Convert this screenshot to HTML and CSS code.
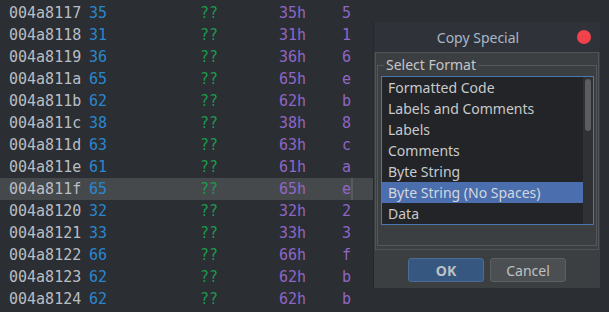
FILE: index.html
```html
<!DOCTYPE html>
<html>
<head>
<meta charset="utf-8">
<link rel="stylesheet" href="styles.css">
</head>
<body>
<div class="listing">
  <div class="row"><span class="addr">004a8117</span><span class="byte">35</span><span class="q">??</span><span class="hex">35h</span><span class="ch">5</span></div>
  <div class="row"><span class="addr">004a8118</span><span class="byte">31</span><span class="q">??</span><span class="hex">31h</span><span class="ch">1</span></div>
  <div class="row"><span class="addr">004a8119</span><span class="byte">36</span><span class="q">??</span><span class="hex">36h</span><span class="ch">6</span></div>
  <div class="row"><span class="addr">004a811a</span><span class="byte">65</span><span class="q">??</span><span class="hex">65h</span><span class="ch">e</span></div>
  <div class="row"><span class="addr">004a811b</span><span class="byte">62</span><span class="q">??</span><span class="hex">62h</span><span class="ch">b</span></div>
  <div class="row"><span class="addr">004a811c</span><span class="byte">38</span><span class="q">??</span><span class="hex">38h</span><span class="ch">8</span></div>
  <div class="row"><span class="addr">004a811d</span><span class="byte">63</span><span class="q">??</span><span class="hex">63h</span><span class="ch">c</span></div>
  <div class="row"><span class="addr">004a811e</span><span class="byte">61</span><span class="q">??</span><span class="hex">61h</span><span class="ch">a</span></div>
  <div class="row current"><span class="addr">004a811f</span><span class="byte">65</span><span class="q">??</span><span class="hex">65h</span><span class="ch">e</span><span class="cursor"></span></div>
  <div class="row"><span class="addr">004a8120</span><span class="byte">32</span><span class="q">??</span><span class="hex">32h</span><span class="ch">2</span></div>
  <div class="row"><span class="addr">004a8121</span><span class="byte">33</span><span class="q">??</span><span class="hex">33h</span><span class="ch">3</span></div>
  <div class="row"><span class="addr">004a8122</span><span class="byte">66</span><span class="q">??</span><span class="hex">66h</span><span class="ch">f</span></div>
  <div class="row"><span class="addr">004a8123</span><span class="byte">62</span><span class="q">??</span><span class="hex">62h</span><span class="ch">b</span></div>
  <div class="row"><span class="addr">004a8124</span><span class="byte">62</span><span class="q">??</span><span class="hex">62h</span><span class="ch">b</span></div>
</div>

<div class="dialog">
  <div class="titlebar">
    <span class="title">Copy Special</span>
    <span class="close"></span>
  </div>
  <div class="panel">
    <fieldset class="group">
      <legend>Select Format</legend>
      <div class="list">
        <div class="items">
          <div class="item">Formatted Code</div>
          <div class="item">Labels and Comments</div>
          <div class="item">Labels</div>
          <div class="item">Comments</div>
          <div class="item">Byte String</div>
          <div class="item selected">Byte String (No Spaces)</div>
          <div class="item">Data</div>
        </div>
        <div class="scroll"><div class="thumb"></div></div>
      </div>
    </fieldset>
  </div>
  <div class="buttons">
    <button class="btn ok">OK</button>
    <button class="btn cancel">Cancel</button>
  </div>
</div>
</body>
</html>
```

FILE: styles.css
```css
html, body {
  margin: 0;
  padding: 0;
  background: #2b2e32;
  width: 609px;
  height: 312px;
  overflow: hidden;
}

.listing {
  padding-top: 2px;
  font-family: "DejaVu Sans Mono", monospace;
  font-size: 15px;
}

.row {
  position: relative;
  display: grid;
  grid-template-columns: 80px 111px 79px 63px 40px;
  height: 22px;
  align-items: center;
  padding-left: 9px;
  width: 364px;
}

.row.current {
  background: #45494c;
}

.cursor {
  position: absolute;
  left: 351px;
  top: 0;
  width: 2px;
  height: 22px;
  background: #575b5e;
}

.addr { color: #b9bdc4; }
.byte { color: #2a86d0; }
.q { color: #1b9a4c; }
.hex { color: #9066c6; }
.ch { color: #9066c6; }

.dialog {
  position: absolute;
  left: 374px;
  top: 22px;
  width: 226px;
  height: 266px;
  background: #3c3f41;
  display: flex;
  flex-direction: column;
  font-family: "Noto Sans", sans-serif;
  font-size: 14px;
  color: #c4c6c8;
  box-shadow: -1px 0 0 #26292c;
}

.titlebar {
  height: 30px;
  background: #2f3239;
  display: flex;
  align-items: center;
  position: relative;
}

.title {
  flex: 1;
  text-align: center;
  padding-right: 18px;
  color: #a9b6c6;
}

.close {
  position: absolute;
  right: 9px;
  top: 8px;
  width: 14px;
  height: 14px;
  border-radius: 50%;
  background: #f2434c;
}

.panel {
  margin: 0 1px;
  height: 198px;
  border: 1px solid #515457;
  box-sizing: border-box;
  padding: 0 1px 3px 1px;
  display: flex;
}

.group {
  flex: 1;
  margin: 0;
  padding: 0 2px 0 3px;
  border: 1px solid #55585b;
  margin-top: 4px;
  min-width: 0;
}

.group legend {
  padding: 0 2px;
  margin-left: 3px;
  line-height: 16px;
  color: #c4c6c8;
}

.list {
  margin-top: 3px;
  border: 1px solid #4a78ae;
  background: #222427;
  height: 147px;
  display: flex;
}

.items {
  flex: 1;
}

.item {
  height: 21px;
  line-height: 21px;
  padding-left: 6px;
  color: #c8cacc;
  white-space: nowrap;
}

.item.selected {
  background: #4b6eaf;
  color: #d4d7dc;
}

.scroll {
  width: 10px;
  background: #2f3134;
  padding: 2px 2px 0 2px;
  box-sizing: border-box;
}

.thumb {
  width: 6px;
  height: 52px;
  border-radius: 3px;
  background: #5b5e61;
}

.buttons {
  flex: 1;
  display: flex;
  justify-content: center;
  align-items: flex-start;
  gap: 6px;
  padding-top: 8px;
}

.btn {
  width: 76px;
  height: 24px;
  border-radius: 3px;
  font-family: "Noto Sans", sans-serif;
  font-size: 14px;
  padding: 0;
  color: #bfc1c3;
}

.ok {
  background: #365880;
  border: 1px solid #4c6c94;
  font-weight: bold;
}

.cancel {
  background: #4c4f51;
  border: 1px solid #5d6063;
}
```
